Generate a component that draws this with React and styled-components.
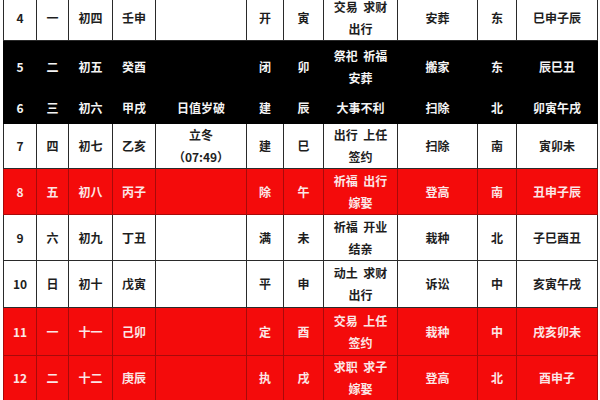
import React from "react";
import styled, { createGlobalStyle, css } from "styled-components";

const Global = createGlobalStyle`
  html, body { margin: 0; padding: 0; background: #ffffff; }
  body { width: 600px; height: 400px; overflow: hidden; }
`;

const Frame = styled.div`
  width: 600px;
  height: 400px;
  overflow: hidden;
  background: #ffffff;
  padding-left: 3px;
  box-sizing: border-box;
`;

const Table = styled.table`
  margin-top: -5px;
  width: 595px;
  table-layout: fixed;
  border-collapse: collapse;
  font-family: "Noto Sans CJK SC", "Noto Sans", sans-serif;
  font-size: 12px;
  font-weight: 700;
  word-spacing: 3px;
  border-bottom: 3px solid #111;
`;

const themes = {
  white: css`
    background: #ffffff;
    color: #1e1e1e;
    td { border: 1px solid #2a2a2a; }
  `,
  black: css`
    background: #000000;
    color: #f4f4f4;
    td { border: 1px solid #000000; }
  `,
  red: css`
    background: #f40b0b;
    color: #fbe6e6;
    td { border: 1px solid #a80a0a; }
  `,
};

const Row = styled.tr`
  height: ${(p) => p.$h}px;
  ${(p) => themes[p.$tone]}
`;

const Cell = styled.td`
  padding: 0;
  text-align: center;
  vertical-align: middle;
  line-height: 22px;
  white-space: nowrap;
  overflow: hidden;
`;

const widths = [33, 32, 44, 43, 91, 37, 40, 74, 80, 39, 81];

const rows = [
  { tone: "white", h: 43, c: ["4", "一", "初四", "壬申", "", "开", "寅", ["交易 求财", "出行"], "安葬", "东", "巳申子辰"] },
  { tone: "black", h: 52, c: ["5", "二", "初五", "癸酉", "", "闭", "卯", ["祭祀 祈福", "安葬"], "搬家", "东", "辰巳丑"] },
  { tone: "black", h: 31, c: ["6", "三", "初六", "甲戌", "日值岁破", "建", "辰", "大事不利", "扫除", "北", "卯寅午戌"] },
  { tone: "white", h: 45, c: ["7", "四", "初七", "乙亥", ["立冬", "（07:49）"], "建", "巳", ["出行 上任", "签约"], "扫除", "南", "寅卯未"] },
  { tone: "red", h: 46, c: ["8", "五", "初八", "丙子", "", "除", "午", ["祈福 出行", "嫁娶"], "登高", "南", "丑申子辰"] },
  { tone: "white", h: 46, c: ["9", "六", "初九", "丁丑", "", "满", "未", ["祈福 开业", "结亲"], "栽种", "北", "子巳酉丑"] },
  { tone: "white", h: 47, c: ["10", "日", "初十", "戊寅", "", "平", "申", ["动土 求财", "出行"], "诉讼", "中", "亥寅午戌"] },
  { tone: "red", h: 48, c: ["11", "一", "十一", "己卯", "", "定", "酉", ["交易 上任", "签约"], "栽种", "中", "戌亥卯未"] },
  { tone: "red", h: 44, c: ["12", "二", "十二", "庚辰", "", "执", "戌", ["求职 求子", "嫁娶"], "登高", "北", "酉申子"] },
];

function CellText({ value }) {
  if (Array.isArray(value)) {
    return value.map((line, i) => (
      <React.Fragment key={i}>
        {i > 0 && <br />}
        {line}
      </React.Fragment>
    ));
  }
  return value;
}

export default function App() {
  return (
    <>
      <Global />
      <Frame>
        <Table>
          <colgroup>
            {widths.map((w, i) => (
              <col key={i} style={{ width: w }} />
            ))}
          </colgroup>
          <tbody>
            {rows.map((r, i) => (
              <Row key={i} $tone={r.tone} $h={r.h}>
                {r.c.map((v, j) => (
                  <Cell key={j}>
                    <CellText value={v} />
                  </Cell>
                ))}
              </Row>
            ))}
          </tbody>
        </Table>
      </Frame>
    </>
  );
}
